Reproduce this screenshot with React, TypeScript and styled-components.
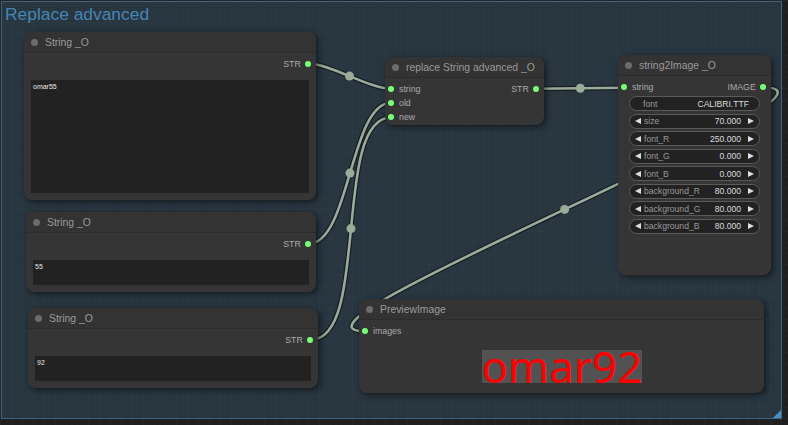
import React from 'react';
import styled, { createGlobalStyle } from 'styled-components';

const GlobalStyle = createGlobalStyle`
  html, body {
    margin: 0;
    padding: 0;
    background: #1f1f1f;
    font-family: "Liberation Sans", Arial, sans-serif;
  }
`;

const Canvas = styled.div`
  position: relative;
  width: 788px;
  height: 425px;
  overflow: hidden;
  background-color: #202020;
  background-image:
    linear-gradient(rgba(255, 255, 255, 0.025) 1px, transparent 1px),
    linear-gradient(90deg, rgba(255, 255, 255, 0.025) 1px, transparent 1px);
  background-size: 11px 11px;
`;

const Group = styled.div`
  position: absolute;
  left: 1px;
  top: 1px;
  width: 781px;
  height: 418px;
  box-sizing: border-box;
  background: rgba(63, 120, 158, 0.25);
  border: 1px solid #3d6282;
`;

const GroupTitle = styled.div`
  padding: 2px 0 0 3px;
  font-size: 17.4px;
  line-height: 20px;
  color: #4685b5;
`;

const ResizeHandle = styled.div`
  position: absolute;
  right: 0;
  bottom: 0;
  width: 0;
  height: 0;
  border-style: solid;
  border-width: 0 0 8px 8px;
  border-color: transparent transparent #4a8cc4 transparent;
`;

const Links = styled.svg`
  position: absolute;
  left: 0;
  top: 0;
  width: 788px;
  height: 425px;
  pointer-events: none;
`;

const NodeBox = styled.div<{ $x: number; $y: number; $w: number; $h: number }>`
  position: absolute;
  left: ${(p) => p.$x}px;
  top: ${(p) => p.$y}px;
  width: ${(p) => p.$w}px;
  height: ${(p) => p.$h}px;
  display: flex;
  flex-direction: column;
  background: #353535;
  border-radius: 8px;
  box-shadow: 2px 2px 6px rgba(0, 0, 0, 0.55);
  overflow: hidden;
`;

const TitleBar = styled.div`
  height: 21px;
  box-sizing: border-box;
  display: flex;
  align-items: center;
  gap: 7px;
  padding-left: 7px;
  background: #333333;
  border-bottom: 1px solid #2c2c2c;
`;

const TitleDot = styled.span`
  width: 7px;
  height: 7px;
  border-radius: 50%;
  background: #6c6c6c;
`;

const TitleText = styled.span`
  font-size: 10.4px;
  color: #9a9a9a;
  white-space: nowrap;
`;

const NodeBody = styled.div`
  flex: 1;
  display: flex;
  flex-direction: column;
  padding-top: 4px;
  min-height: 0;
`;

const SlotRow = styled.div`
  height: 14px;
  display: grid;
  grid-template-columns: 1fr 1fr;
  align-items: center;
`;

const Slot = styled.div<{ $out?: boolean }>`
  display: flex;
  align-items: center;
  gap: ${(p) => (p.$out ? '4.5px' : '5px')};
  justify-content: ${(p) => (p.$out ? 'flex-end' : 'flex-start')};
  padding: ${(p) => (p.$out ? '0 4.7px 0 0' : '0 0 0 3px')};
  font-size: 8.8px;
  color: #aaaaaa;
  white-space: nowrap;
`;

const SlotDot = styled.span`
  width: 6px;
  height: 6px;
  border-radius: 50%;
  background: #77ff77;
  flex: none;
`;

const TextArea = styled.div`
  flex: 1;
  margin: 9px 7px 7px;
  padding: 2px;
  background: #222222;
  color: #e8e8e8;
  font-size: 7px;
  line-height: 9px;
`;

const WidgetList = styled.div`
  display: flex;
  flex-direction: column;
  gap: 2.5px;
  margin: 2px 11px 0;
`;

const Widget = styled.div`
  height: 15px;
  box-sizing: border-box;
  display: flex;
  align-items: center;
  padding: 0 5px;
  gap: 3px;
  border: 1px solid #5a5a5a;
  border-radius: 8px;
  background: #222222;
  font-size: 8.6px;
`;

const Arrow = styled.span<{ $dir: 'left' | 'right' }>`
  width: 0;
  height: 0;
  flex: none;
  border-top: 3.5px solid transparent;
  border-bottom: 3.5px solid transparent;
  ${(p) =>
    p.$dir === 'left'
      ? 'border-right: 6px solid #dddddd;'
      : 'border-left: 6px solid #dddddd;'}
`;

const WidgetLabel = styled.span<{ $combo?: boolean }>`
  flex: 1;
  color: #999999;
  padding-left: ${(p) => (p.$combo ? '8px' : '0')};
  white-space: nowrap;
`;

const WidgetValue = styled.span<{ $combo?: boolean }>`
  color: #dddddd;
  padding-right: ${(p) => (p.$combo ? '5px' : '4px')};
  white-space: nowrap;
`;

const PreviewArea = styled.div`
  display: flex;
  justify-content: center;
  margin-top: 12px;
`;

const PreviewPicture = styled.div`
  width: 160px;
  height: 33px;
  background: #525252;
  color: #ff0000;
  font-family: "Noto Sans", "Open Sans", sans-serif;
  font-size: 44px;
  line-height: 33px;
  text-align: center;
  white-space: nowrap;
`;

type NodeProps = {
  x: number;
  y: number;
  w: number;
  h: number;
  title: string;
  children?: React.ReactNode;
};

const Node: React.FC<NodeProps> = ({ x, y, w, h, title, children }) => (
  <NodeBox $x={x} $y={y} $w={w} $h={h}>
    <TitleBar>
      <TitleDot />
      <TitleText>{title}</TitleText>
    </TitleBar>
    <NodeBody>{children}</NodeBody>
  </NodeBox>
);

const Row: React.FC<{ input?: string; output?: string }> = ({ input, output }) => (
  <SlotRow>
    <div>
      {input && (
        <Slot>
          <SlotDot />
          {input}
        </Slot>
      )}
    </div>
    <div>
      {output && (
        <Slot $out>
          {output}
          <SlotDot />
        </Slot>
      )}
    </div>
  </SlotRow>
);

const NumberWidget: React.FC<{ label: string; value: string }> = ({ label, value }) => (
  <Widget>
    <Arrow $dir="left" />
    <WidgetLabel>{label}</WidgetLabel>
    <WidgetValue>{value}</WidgetValue>
    <Arrow $dir="right" />
  </Widget>
);

// litegraph style spline: horizontal handles, length = distance / 4
const spline = (x1: number, y1: number, x2: number, y2: number) => {
  const d = Math.hypot(x2 - x1, y2 - y1) * 0.25;
  const c1x = x1 + d;
  const c2x = x2 - d;
  const mx = 0.125 * x1 + 0.375 * c1x + 0.375 * c2x + 0.125 * x2;
  const my = (y1 + y2) / 2;
  return { path: `M${x1} ${y1} C${c1x} ${y1} ${c2x} ${y2} ${x2} ${y2}`, mx, my };
};

const links = [
  spline(308, 63.5, 391, 88.7),
  spline(309, 243.5, 391, 102.7),
  spline(311, 339.7, 391, 117.5),
  spline(536.3, 88.7, 624.3, 87.7),
  spline(763.3, 87.5, 366, 331.3),
];

const widgets = [
  { label: 'size', value: '70.000' },
  { label: 'font_R', value: '250.000' },
  { label: 'font_G', value: '0.000' },
  { label: 'font_B', value: '0.000' },
  { label: 'background_R', value: '80.000' },
  { label: 'background_G', value: '80.000' },
  { label: 'background_B', value: '80.000' },
];

const App: React.FC = () => (
  <>
    <GlobalStyle />
    <Canvas>
      <Group>
        <GroupTitle>Replace advanced</GroupTitle>
        <ResizeHandle />
      </Group>

      <Links viewBox="0 0 788 425">
        {links.map((l, i) => (
          <g key={i}>
            <path d={l.path} fill="none" stroke="rgba(0,0,0,0.45)" strokeWidth={5} />
            <path d={l.path} fill="none" stroke="#9aab9a" strokeWidth={2.6} />
            <circle cx={l.mx} cy={l.my} r={4.5} fill="#9aab9a" />
          </g>
        ))}
      </Links>

      <Node x={24} y={32} w={292} h={168} title="String _O">
        <Row output="STR" />
        <TextArea>omar55</TextArea>
      </Node>

      <Node x={26} y={212} w={290} h={80} title="String _O">
        <Row output="STR" />
        <TextArea>55</TextArea>
      </Node>

      <Node x={28} y={308} w={290} h={80} title="String _O">
        <Row output="STR" />
        <TextArea>92</TextArea>
      </Node>

      <Node x={385} y={57} w={159} h={68} title="replace String advanced _O">
        <Row input="string" output="STR" />
        <Row input="old" />
        <Row input="new" />
      </Node>

      <Node x={618} y={55} w={153} h={220} title="string2Image _O">
        <Row input="string" output="IMAGE" />
        <WidgetList>
          <Widget>
            <WidgetLabel $combo>font</WidgetLabel>
            <WidgetValue $combo>CALIBRI.TTF</WidgetValue>
          </Widget>
          {widgets.map((w) => (
            <NumberWidget key={w.label} label={w.label} value={w.value} />
          ))}
        </WidgetList>
      </Node>

      <Node x={359} y={299} w={405} h={94} title="PreviewImage">
        <Row input="images" />
        <PreviewArea>
          <PreviewPicture>omar92</PreviewPicture>
        </PreviewArea>
      </Node>
    </Canvas>
  </>
);

export default App;
